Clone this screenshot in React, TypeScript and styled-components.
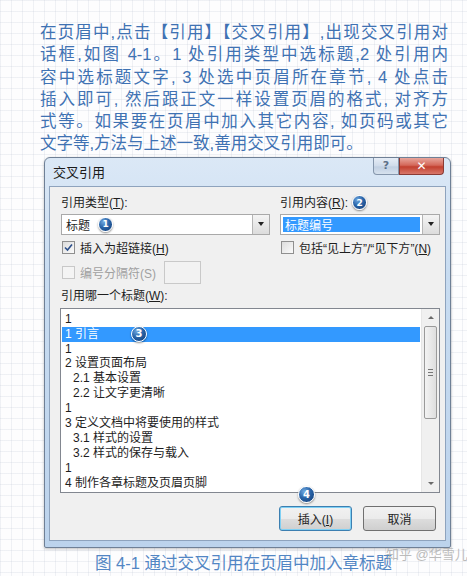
import { createGlobalStyle, styled } from "styled-components";

const GlobalStyle = createGlobalStyle`
  html, body {
    margin: 0;
    padding: 0;
  }
  body {
    width: 467px;
    height: 576px;
    overflow: hidden;
    background-color: #fdfdfe;
    background-image:
      linear-gradient(to right, rgba(190, 198, 212, 0.22) 1px, transparent 1px),
      linear-gradient(to bottom, rgba(190, 198, 212, 0.22) 1px, transparent 1px);
    background-size: 11px 11px;
    font-family: "Liberation Sans", "Noto Sans CJK SC", sans-serif;
    text-autospace: no-autospace;
  }
`;

const Page = styled.div`
  position: relative;
  width: 467px;
  height: 576px;
  padding-top: 21px;
  box-sizing: border-box;
`;

const Intro = styled.div`
  margin: 0 19px 0 40px;
  color: #3f72b3;
  font-size: 16.5px;
  line-height: 22.3px;
`;

const IntroLine = styled.div<{ $last?: boolean }>`
  white-space: nowrap;
  text-align: ${(p) => (p.$last ? "left" : "justify")};
  text-align-last: ${(p) => (p.$last ? "left" : "justify")};
`;

const Window = styled.div`
  margin: 2px 0 0 44px;
  width: 407px;
  height: 391px;
  box-sizing: border-box;
  border: 1px solid #6f8096;
  border-radius: 6px 6px 2px 2px;
  background: linear-gradient(to bottom, #dbe8f6 0%, #c8dcf1 30%, #bcd3ec 100%);
  display: flex;
  flex-direction: column;
  padding: 0 4px 6px 4px;
  box-shadow: 0 1px 3px rgba(0, 0, 0, 0.25);
`;

const TitleBar = styled.div`
  height: 28px;
  display: flex;
  align-items: flex-start;
  justify-content: space-between;
`;

const Title = styled.div`
  padding: 7px 0 0 4px;
  font-size: 13px;
  line-height: 16px;
  color: #1a1a1a;
`;

const Caption = styled.div`
  display: flex;
  margin-right: 2px;
`;

const CaptionButton = styled.div<{ $close?: boolean }>`
  width: ${(p) => (p.$close ? "45px" : "26px")};
  height: 17px;
  box-sizing: border-box;
  border: 1px solid ${(p) => (p.$close ? "#8a3a34" : "#8596ac")};
  border-top: none;
  border-radius: ${(p) => (p.$close ? "0 0 4px 0" : "0 0 0 4px")};
  background: ${(p) =>
    p.$close
      ? "linear-gradient(to bottom, #e8a69c 0%, #d4685a 45%, #c2402f 55%, #d8776a 100%)"
      : "linear-gradient(to bottom, #e6edf6 0%, #cfdbea 50%, #c0cfe2 55%, #d7e2ee 100%)"};
  display: flex;
  align-items: center;
  justify-content: center;
  color: ${(p) => (p.$close ? "#fff" : "#5c6f88")};
  font-family: "DejaVu Sans", sans-serif;
  font-weight: bold;
  font-size: ${(p) => (p.$close ? "12px" : "11px")};
`;

const Panel = styled.div`
  flex: 1;
  background: #f0f0f0;
  border: 1px solid #8ea3bd;
  padding: 6px 6px 8px 11px;
  display: flex;
  flex-direction: column;
  font-size: 12px;
  color: #1e1e1e;
`;

const Key = styled.span`
  font-family: "Liberation Sans", sans-serif;
`;

const TopGrid = styled.div`
  display: grid;
  grid-template-columns: 209px 160px;
  column-gap: 10px;
`;

const FieldLabel = styled.div`
  height: 20px;
  display: flex;
  align-items: center;
  gap: 4px;
  line-height: 14px;
`;

const Combo = styled.div`
  height: 21px;
  box-sizing: border-box;
  border: 1px solid #a9a9a9;
  background: #fff;
  display: flex;
  align-items: stretch;
  margin-top: 1px;
`;

const ComboValue = styled.div<{ $selected?: boolean }>`
  flex: 1;
  margin: 2px;
  padding-left: 2px;
  display: flex;
  align-items: center;
  gap: 8px;
  background: ${(p) => (p.$selected ? "#3399ff" : "transparent")};
  color: ${(p) => (p.$selected ? "#fff" : "#1e1e1e")};
`;

const DropButton = styled.div`
  width: 16px;
  border-left: 1px solid #b5b5b5;
  background: linear-gradient(to bottom, #f4f4f4, #dcdcdc);
  display: flex;
  align-items: center;
  justify-content: center;
`;

const Arrow = styled.span`
  width: 0;
  height: 0;
  border-left: 3.5px solid transparent;
  border-right: 3.5px solid transparent;
  border-top: 4px solid #222;
`;

const CheckRow = styled.label<{ $disabled?: boolean }>`
  height: 25px;
  display: flex;
  align-items: center;
  gap: 5px;
  padding-left: 1px;
  color: ${(p) => (p.$disabled ? "#a0a0a0" : "#1e1e1e")};
  white-space: nowrap;
`;

const Box = styled.span<{ $disabled?: boolean }>`
  width: 13px;
  height: 13px;
  box-sizing: border-box;
  border: 1px solid ${(p) => (p.$disabled ? "#c8c8c8" : "#8f8f8f")};
  background: ${(p) =>
    p.$disabled ? "#f4f4f4" : "linear-gradient(135deg, #dcdcdc, #fbfbfb)"};
  display: flex;
  align-items: center;
  justify-content: center;
  flex: none;
`;

const SepInput = styled.span`
  width: 37px;
  height: 23px;
  box-sizing: border-box;
  border: 1px solid #c9c9c9;
  background: #f2f2f2;
  margin-left: 3px;
`;

const ListLabel = styled.div`
  height: 20px;
  line-height: 20px;
  margin-top: 1px;
`;

const ListBox = styled.div`
  margin: 2px 0 0 -1px;
  width: 380px;
  height: 185px;
  box-sizing: border-box;
  border: 1px solid #828790;
  background: #fff;
  display: flex;
`;

const Items = styled.div`
  flex: 1;
  padding: 3px 1px 0 1px;
  overflow: hidden;
`;

const Item = styled.div<{ $level?: number; $selected?: boolean }>`
  height: 14.9px;
  line-height: 14.9px;
  padding-left: ${(p) => 3 + (p.$level ?? 0) * 8}px;
  display: flex;
  align-items: center;
  white-space: nowrap;
  background: ${(p) => (p.$selected ? "#3399ff" : "transparent")};
  color: ${(p) => (p.$selected ? "#fff" : "#1e1e1e")};
`;

const RowBadgeSlot = styled.span`
  display: inline-flex;
  margin-left: 32px;
`;

const ScrollBar = styled.div`
  width: 17px;
  background: #f0f0f0;
  border-left: 1px solid #e6e6e6;
  display: flex;
  flex-direction: column;
  align-items: center;
`;

const ScrollArrow = styled.div<{ $up?: boolean }>`
  height: 17px;
  width: 100%;
  display: flex;
  align-items: center;
  justify-content: center;
  &::after {
    content: "";
    border-left: 3px solid transparent;
    border-right: 3px solid transparent;
    ${(p) =>
      p.$up ? "border-bottom: 3px solid #6a6a6a;" : "border-top: 3px solid #6a6a6a;"}
  }
`;

const ScrollTrack = styled.div`
  flex: 1;
`;

const Thumb = styled.div`
  width: 13px;
  height: 93px;
  box-sizing: border-box;
  border: 1px solid #9a9a9a;
  border-radius: 2px;
  background: linear-gradient(to right, #f3f3f3, #dedede);
  display: flex;
  flex-direction: column;
  align-items: center;
  justify-content: center;
  gap: 2px;
`;

const Grip = styled.span`
  width: 5px;
  height: 1px;
  background: #777;
`;

const ButtonRow = styled.div`
  position: relative;
  margin-top: 13px;
  display: flex;
  justify-content: flex-end;
  gap: 11px;
  padding-right: 3px;
`;

const DialogButton = styled.div<{ $default?: boolean }>`
  width: 73px;
  height: 25px;
  box-sizing: border-box;
  border: 1px solid ${(p) => (p.$default ? "#3c7fb1" : "#707070")};
  border-radius: 3px;
  box-shadow: ${(p) => (p.$default ? "inset 0 0 0 1px #7fd0f4" : "none")};
  background: linear-gradient(to bottom, #f2f2f2 0%, #ebebeb 50%, #dddddd 51%, #cfcfcf 100%);
  display: flex;
  align-items: center;
  justify-content: center;
  color: #1e1e1e;
`;

const Badge = styled.span<{ $size?: number }>`
  width: ${(p) => p.$size ?? 15}px;
  height: ${(p) => p.$size ?? 15}px;
  box-sizing: border-box;
  border-radius: 50%;
  border: 1.5px solid #fff;
  background: radial-gradient(circle at 35% 30%, #6fa8e0 0%, #2a64a8 45%, #103a72 100%);
  box-shadow: 0 1px 2px rgba(0, 0, 0, 0.45);
  color: #fff;
  font-family: "DejaVu Sans", sans-serif;
  font-weight: bold;
  font-size: ${(p) => ((p.$size ?? 15) > 15 ? 10 : 9)}px;
  display: inline-flex;
  align-items: center;
  justify-content: center;
  flex: none;
`;

const FloatingBadge = styled(Badge)`
  position: absolute;
  left: 237px;
  top: -20px;
`;

const FigureCaption = styled.div`
  margin: 4px 0 0 95px;
  color: #5286c4;
  font-size: 16.5px;
  line-height: 22px;
`;

const Watermark = styled.div`
  position: absolute;
  left: 386px;
  top: 544px;
  color: rgba(175, 175, 175, 0.85);
  font-size: 13px;
  white-space: nowrap;
`;

const introLines = [
  "在页眉中,点击【引用】【交叉引用】,出现交叉引用对",
  "话框,如图 4-1。1 处引用类型中选标题,2 处引用内",
  "容中选标题文字, 3 处选中页眉所在章节, 4 处点击",
  "插入即可, 然后跟正文一样设置页眉的格式, 对齐方",
  "式等。如果要在页眉中加入其它内容, 如页码或其它",
  "文字等,方法与上述一致,善用交叉引用即可。",
];

const headings: { text: string; level?: number }[] = [
  { text: "1" },
  { text: "1 引言" },
  { text: "1" },
  { text: "2 设置页面布局" },
  { text: "2.1 基本设置", level: 1 },
  { text: "2.2 让文字更清晰", level: 1 },
  { text: "1" },
  { text: "3 定义文档中将要使用的样式" },
  { text: "3.1 样式的设置", level: 1 },
  { text: "3.2 样式的保存与载入", level: 1 },
  { text: "1" },
  { text: "4 制作各章标题及页眉页脚" },
];

function CheckMark() {
  return (
    <svg width="9" height="9" viewBox="0 0 9 9">
      <path d="M1 4.5 L3.5 7 L8 1.5" fill="none" stroke="#2c4f8a" strokeWidth="1.6" />
    </svg>
  );
}

export default function App() {
  return (
    <Page>
      <GlobalStyle />
      <Intro>
        {introLines.map((line, i) => (
          <IntroLine key={i} $last={i === introLines.length - 1}>
            {line}
          </IntroLine>
        ))}
      </Intro>

      <Window>
        <TitleBar>
          <Title>交叉引用</Title>
          <Caption>
            <CaptionButton>?</CaptionButton>
            <CaptionButton $close>✕</CaptionButton>
          </Caption>
        </TitleBar>

        <Panel>
          <TopGrid>
            <FieldLabel>
              <span>
                引用类型<Key>(<u>T</u>):</Key>
              </span>
            </FieldLabel>
            <FieldLabel>
              <span>
                引用内容<Key>(<u>R</u>):</Key>
              </span>
              <Badge>2</Badge>
            </FieldLabel>
            <Combo>
              <ComboValue>
                标题
                <Badge>1</Badge>
              </ComboValue>
              <DropButton>
                <Arrow />
              </DropButton>
            </Combo>
            <Combo>
              <ComboValue $selected>标题编号</ComboValue>
              <DropButton>
                <Arrow />
              </DropButton>
            </Combo>
            <CheckRow>
              <Box>
                <CheckMark />
              </Box>
              <span>
                插入为超链接<Key>(<u>H</u>)</Key>
              </span>
            </CheckRow>
            <CheckRow>
              <Box />
              <span>
                包括<Key>“</Key>见上方<Key>”/“</Key>见下方<Key>”(<u>N</u>)</Key>
              </span>
            </CheckRow>
            <CheckRow $disabled>
              <Box $disabled />
              <span>
                编号分隔符<Key>(S)</Key>
              </span>
              <SepInput />
            </CheckRow>
          </TopGrid>

          <ListLabel>
            引用哪一个标题<Key>(<u>W</u>):</Key>
          </ListLabel>
          <ListBox>
            <Items>
              {headings.map((h, i) => (
                <Item key={i} $level={h.level} $selected={i === 1}>
                  {h.text}
                  {i === 1 && (
                    <RowBadgeSlot>
                      <Badge $size={16}>3</Badge>
                    </RowBadgeSlot>
                  )}
                </Item>
              ))}
            </Items>
            <ScrollBar>
              <ScrollArrow $up />
              <Thumb>
                <Grip />
                <Grip />
                <Grip />
              </Thumb>
              <ScrollTrack />
              <ScrollArrow />
            </ScrollBar>
          </ListBox>

          <ButtonRow>
            <FloatingBadge $size={17}>4</FloatingBadge>
            <DialogButton $default>
              <span>
                插入<Key>(<u>I</u>)</Key>
              </span>
            </DialogButton>
            <DialogButton>取消</DialogButton>
          </ButtonRow>
        </Panel>
      </Window>

      <FigureCaption>图 4-1 通过交叉引用在页眉中加入章标题</FigureCaption>
      <Watermark>知乎 @华雪儿</Watermark>
    </Page>
  );
}
